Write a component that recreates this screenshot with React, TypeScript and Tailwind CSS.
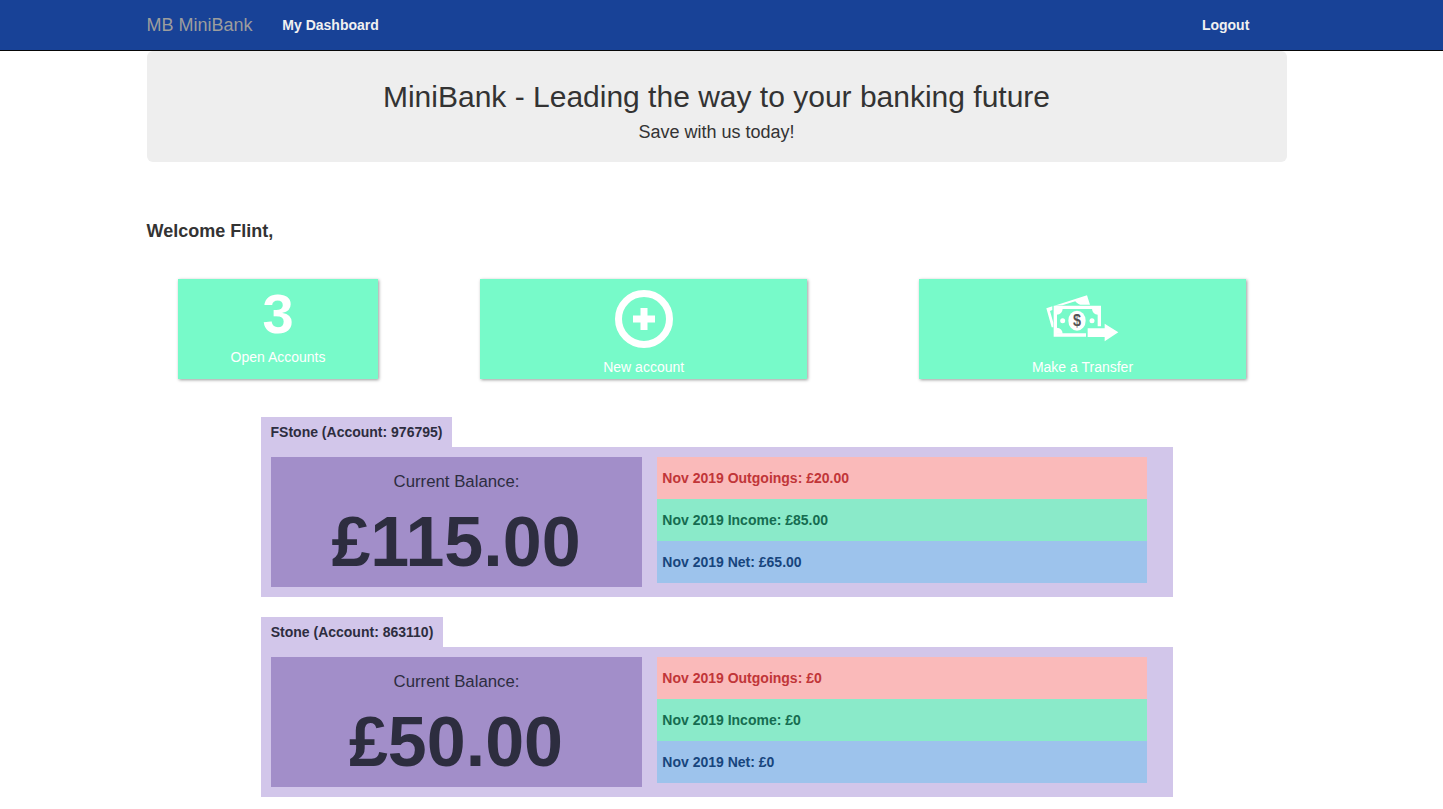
const accounts = [
  { name: 'FStone (Account: 976795)', tab: 'w-[191px]', balance: '£115.00', out: '£20.00', income: '£85.00', net: '£65.00' },
  { name: 'Stone (Account: 863110)', tab: 'w-[182px]', balance: '£50.00', out: '£0', income: '£0', net: '£0' },
];

function PlusIcon() {
  return (
    <svg className="block h-[60px] w-[60px]" viewBox="0 0 60 60">
      <circle cx="30" cy="30" r="25.5" fill="none" stroke="#fff" strokeWidth="7" />
      <path d="M26.5 19h7v7.5H41v7h-7.5V41h-7v-7.5H19v-7h7.5z" fill="#fff" />
    </svg>
  );
}

function TransferIcon() {
  return (
    <svg className="block h-[60px] w-[80px]" viewBox="37 27 240 180">
      <path d="M50 85L68 79V90L61 93L71 128V142H66z" fill="#fff" />
      <path d="M74 77L172 46L181 74H150Q138 68 137 64L98 76z" fill="#fff" />
      <path d="M104 76L138 65Q142 74 152 75z" fill="#77fac9" />
      <path d="M72 77H214V139H204V87H82V160H169V170H72z" fill="#fff" />
      <path d="M81 86H99Q98 103 81 104zM205 86H187Q188 103 205 104zM81 161H99Q98 144 81 143z" fill="#fff" />
      <ellipse cx="142" cy="122" rx="26" ry="30" fill="#fff" />
      <circle cx="99" cy="122" r="7.5" fill="#fff" />
      <circle cx="187" cy="122" r="7.5" fill="#fff" />
      <text transform="translate(142 138) scale(0.9 1)" textAnchor="middle" fontSize="48" fontWeight="700" fill="#555" fontFamily="Liberation Sans, sans-serif">$</text>
      <path d="M174 145H225V131L266 157L225 184V171H174z" fill="#fff" />
    </svg>
  );
}

const card = 'flex h-[100px] flex-col items-center bg-[#77fac9] text-sm leading-5 text-white shadow-[1px_1px_3px_rgba(0,0,0,0.4)]';

export default function App() {
  return (
    <div className="h-[809px] overflow-hidden bg-white font-['Liberation_Sans',Arial,sans-serif] text-sm leading-5 text-[#333]">
      <nav className="flex h-[51px] items-center border-b border-[#080808] bg-[#184297] pl-[146.5px] pr-[193.7px]">
        <span className="text-lg leading-5 text-[#9d9d9d]">MB MiniBank</span>
        <span className="ml-[29.8px] font-bold text-[#f1f1f1]">My Dashboard</span>
        <span className="ml-auto font-bold text-[#f1f1f1]">Logout</span>
      </nav>
      <main className="ml-[146.5px] w-[1140px]">
        <header className="flex h-[111px] flex-col items-center rounded-md bg-[#eee] pt-[29px]">
          <h1 className="text-[30px] leading-[33px]">MiniBank - Leading the way to your banking future</h1>
          <p className="mt-[9px] text-lg leading-5">Save with us today!</p>
        </header>
        <h2 className="mt-[59px] text-lg font-bold leading-5">Welcome Flint,</h2>
        <section className="mt-[38px] flex pl-[31.5px]">
          <div className={card + ' w-[200px]'}>
            <span className="mt-[3px] text-[56px] font-bold leading-[64px]">3</span>
            <span className="mt-[1px]">Open Accounts</span>
          </div>
          <div className={card + ' ml-[102px] w-[327.4px]'}>
            <div className="pt-[10px]"><PlusIcon /></div>
            <span className="mt-[8px]">New account</span>
          </div>
          <div className={card + ' ml-[111.4px] w-[327.4px]'}>
            <div className="pt-[10px]"><TransferIcon /></div>
            <span className="mt-[8px]">Make a Transfer</span>
          </div>
        </section>
        <section className="ml-[114.5px] mt-[38px] flex w-[912px] flex-col gap-5 text-[#2d2d3f]">
          {accounts.map((a) => (
            <article key={a.name}>
              <div className={'flex h-[30px] items-center justify-center whitespace-nowrap bg-[#d2c6ea] font-bold ' + a.tab}>{a.name}</div>
              <div className="flex h-[150px] gap-[15px] bg-[#d2c6ea] p-[10px]">
                <div className="flex h-[130px] w-[371px] flex-col items-center bg-[#a28ec9]">
                  <span className="mt-[15px] text-[16.8px] leading-5">Current Balance:</span>
                  <span className="mr-[1px] mt-[10px] text-[70px] font-bold leading-[80px]">{a.balance}</span>
                </div>
                <div className="w-[490px] font-bold">
                  <div className="flex h-[42px] items-center bg-[#fababa] pl-[5.3px] text-[#c13538]">Nov 2019 Outgoings: {a.out}</div>
                  <div className="flex h-[42px] items-center bg-[#8aeac9] pl-[5.3px] text-[#156c50]">Nov 2019 Income: {a.income}</div>
                  <div className="flex h-[42px] items-center bg-[#9dc3ec] pl-[5.3px] text-[#17457d]">Nov 2019 Net: {a.net}</div>
                </div>
              </div>
            </article>
          ))}
        </section>
      </main>
    </div>
  );
}
